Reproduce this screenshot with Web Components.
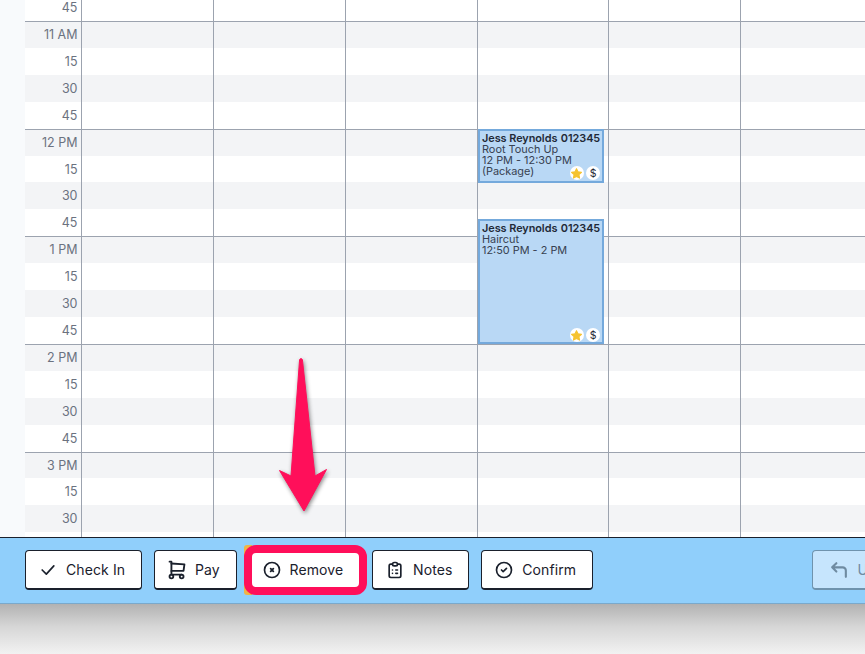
<!DOCTYPE html>
<html lang="en">
<head>
<meta charset="utf-8">
<title>Schedule</title>
<style>
    html, body { margin: 0; height: 100%; overflow: hidden; background: #fff; }
    body { font-family: Inter, "Liberation Sans", sans-serif; }
</style>
</head>
<body>
<schedule-page>
    <time-grid slot="grid">
        <appt-card style="top: 129px; height: 54px; --badge-bottom: 1px;" name="Jess Reynolds" code="012345">
            <div>Root Touch Up</div>
            <div>12 PM - 12:30 PM</div>
            <div>(Package)</div>
        </appt-card>
        <appt-card style="top: 219px; height: 125px;" name="Jess Reynolds" code="012345">
            <div>Haircut</div>
            <div>12:50 PM - 2 PM</div>
        </appt-card>
    </time-grid>
    <action-bar slot="bar">
        <tool-button icon="check">Check In</tool-button>
        <tool-button icon="cart">Pay</tool-button>
        <tool-button icon="remove">Remove</tool-button>
        <tool-button icon="notes">Notes</tool-button>
        <tool-button icon="confirm">Confirm</tool-button>
        <tool-button icon="undo" disabled style="margin-left: 207px;">Undo</tool-button>
    </action-bar>
</schedule-page>

<script>
const icons = {
    check: { box: '0 0 24 24', body: '<path d="M5 12l5 5L19 7"/>' },
    cart: { box: '1.25 1.25 21.5 21.5', body: '<circle cx="6" cy="19" r="2"/><circle cx="17" cy="19" r="2"/><path d="M17 17H6V3H4"/><path d="M6 5l14 1-1 7H6"/>' },
    remove: { box: '0 0 24 24', body: '<circle cx="12" cy="12" r="9"/><path d="M10.4 10.4l3.2 3.2M13.6 10.4l-3.2 3.2" stroke-width="2.2"/>' },
    notes: { box: '0 0 24 24', body: '<path d="M9 5H7a2 2 0 0 0-2 2v12a2 2 0 0 0 2 2h10a2 2 0 0 0 2-2V7a2 2 0 0 0-2-2h-2"/><rect x="9" y="3" width="6" height="4" rx="2"/><path d="M9 12h.01M13 12h2M9 16h.01M13 16h2"/>' },
    confirm: { box: '0 0 24 24', body: '<circle cx="12" cy="12" r="9"/><path d="M9 12l2 2 4-4"/>' },
    undo: { box: '2 2 19 19', body: '<path d="M18 18v-6a3 3 0 0 0-3-3H5l4-4m0 8L5 9"/>' }
};

class SchedulePage extends HTMLElement {
    constructor() {
        super();
        this.attachShadow({ mode: 'open' });
        this.shadowRoot.innerHTML = `
            <style>
                :host {
                    display: flex;
                    flex-direction: column;
                    position: relative;
                    width: 865px;
                    height: 654px;
                    overflow: hidden;
                }
                .bottom {
                    flex: 1;
                    background: linear-gradient(#b2b2b2, #d6d6d6 45%, #f2f2f2);
                }
                .arrow {
                    position: absolute;
                    left: 270px;
                    top: 350px;
                    filter: drop-shadow(1px 2px 2px rgba(0, 0, 0, 0.45));
                }
                .mark {
                    position: absolute;
                    left: 244px;
                    top: 545px;
                    width: 123px;
                    height: 50px;
                    box-sizing: border-box;
                    border: 8px solid #ff0f5a;
                    border-radius: 12px;
                }
                .corner {
                    position: absolute;
                    left: 244px;
                    top: 545px;
                    width: 8px;
                    height: 50px;
                    background: #f0b445;
                    border-radius: 3px 0 0 3px;
                }
            </style>
            <slot name="grid"></slot>
            <slot name="bar"></slot>
            <div class="bottom"></div>
            <div class="corner"></div>
            <div class="mark"></div>
            <svg class="arrow" width="66" height="170" viewBox="270 350 66 170">
                <path fill="#ff0f5a" stroke="#ff0f5a" stroke-width="1" stroke-linejoin="round"
                    d="M299.6 359.5Q301 357.5 302.4 359.5L315 476 326.5 469.5 304 511 279.5 470.5 291 476Z"/>
            </svg>
        `;
    }
}

class TimeGrid extends HTMLElement {
    constructor() {
        super();
        this.attachShadow({ mode: 'open' });
        const hours = ['11 AM', '12 PM', '1 PM', '2 PM', '3 PM'];
        const labels = ['45'];
        hours.forEach((hour) => labels.push(hour, '15', '30', '45'));
        labels[20] = '';
        const rows = labels.slice(0, 21).map((label, index) => {
            const isHour = label.includes('M');
            const cells = '<i></i>'.repeat(6);
            return `<div class="row ${index % 2 ? 'shade' : ''} ${isHour ? 'hour' : ''}"><span>${label}</span>${cells}</div>`;
        }).join('');
        this.shadowRoot.innerHTML = `
            <style>
                :host {
                    display: block;
                    position: relative;
                    height: 537px;
                    flex: none;
                    overflow: hidden;
                    background: #f8fafc;
                }
                .rows {
                    margin-top: -5.9px;
                    margin-left: 25px;
                    background: #fff;
                }
                .row {
                    display: grid;
                    grid-template-columns: 56.49px repeat(6, 131.68px);
                    height: 26.92px;
                    box-sizing: border-box;
                }
                .shade { background: #f3f4f6; }
                .hour { box-shadow: inset 0 1px 0 #9ca3af; }
                span {
                    font-size: 12.5px;
                    line-height: 28.5px;
                    text-align: right;
                    padding-right: 4px;
                    color: #6b7280;
                }
                i { border-left: 1px solid #9ca3af; }
            </style>
            <div class="rows">${rows}</div>
            <slot></slot>
        `;
    }
}

class ApptCard extends HTMLElement {
    constructor() {
        super();
        this.attachShadow({ mode: 'open' });
    }

    connectedCallback() {
        const name = this.getAttribute('name');
        const code = this.getAttribute('code');
        this.shadowRoot.innerHTML = `
            <style>
                :host {
                    position: absolute;
                    left: 478px;
                    width: 126px;
                    box-sizing: border-box;
                    padding: 2px 0 0 2px;
                    background: #b9d8f5;
                    border: 2px solid #74a9dc;
                    font-size: 10.9px;
                    line-height: 11px;
                    color: #374151;
                    white-space: nowrap;
                    overflow: hidden;
                }
                .title {
                    display: flex;
                    gap: 3.5px;
                    font-weight: 600;
                    letter-spacing: -0.05px;
                    color: #1f2937;
                }
                .badges {
                    position: absolute;
                    right: 2px;
                    bottom: var(--badge-bottom, 0);
                    display: flex;
                    gap: 2.3px;
                }
                .badge {
                    display: flex;
                    align-items: center;
                    justify-content: center;
                    width: 14px;
                    height: 14px;
                    border-radius: 50%;
                    background: #fff;
                    font-size: 10.5px;
                    color: #1f2937;
                }
            </style>
            <div class="title"><span>${name}</span><span>${code}</span></div>
            <slot></slot>
            <div class="badges">
                <div class="badge">
                    <svg width="13" height="13" viewBox="0 0 24 24"><path fill="#f5c330" stroke="#f5c330" stroke-width="2" stroke-linejoin="round" d="M12 3l2.8 5.9 6.4.8-4.7 4.4 1.2 6.4-5.7-3.1-5.7 3.1 1.2-6.4-4.7-4.4 6.4-.8z"/></svg>
                </div>
                <div class="badge">$</div>
            </div>
        `;
    }
}

class ActionBar extends HTMLElement {
    constructor() {
        super();
        this.attachShadow({ mode: 'open' });
        this.shadowRoot.innerHTML = `
            <style>
                :host {
                    display: flex;
                    flex: none;
                    align-items: flex-start;
                    gap: 12px;
                    height: 67px;
                    box-sizing: border-box;
                    padding: 12px 0 0 25px;
                    background: #90cffb;
                    border-top: 1px solid #1a202c;
                    border-bottom: 1px solid #7aa9cb;
                    overflow: hidden;
                }
            </style>
            <slot></slot>
        `;
    }
}

class ToolButton extends HTMLElement {
    constructor() {
        super();
        this.attachShadow({ mode: 'open' });
    }

    connectedCallback() {
        const icon = icons[this.getAttribute('icon')];
        this.shadowRoot.innerHTML = `
            <style>
                :host {
                    display: flex;
                    flex: none;
                    align-items: center;
                    gap: 8px;
                    height: 40px;
                    box-sizing: border-box;
                    padding: 0 15.8px 0 12px;
                    background: #fff;
                    border: 1px solid #1a202c;
                    border-bottom-width: 2px;
                    border-radius: 4px;
                    font-size: 14px;
                    letter-spacing: 0.1px;
                    color: #1a202c;
                    white-space: nowrap;
                }
                :host([disabled]) {
                    padding-left: 16.5px;
                    background: #c6e5fd;
                    border-color: #6f93ad;
                    color: #6f8ba1;
                    min-width: 90px;
                }
                svg {
                    width: 20px;
                    height: 20px;
                    fill: none;
                    overflow: visible;
                    stroke: currentColor;
                    stroke-width: 2;
                    stroke-linecap: round;
                    stroke-linejoin: round;
                }
            </style>
            <svg viewBox="${icon.box}">${icon.body}</svg>
            <slot></slot>
        `;
    }
}

customElements.define('schedule-page', SchedulePage);
customElements.define('time-grid', TimeGrid);
customElements.define('appt-card', ApptCard);
customElements.define('action-bar', ActionBar);
customElements.define('tool-button', ToolButton);
</script>
</body>
</html>
